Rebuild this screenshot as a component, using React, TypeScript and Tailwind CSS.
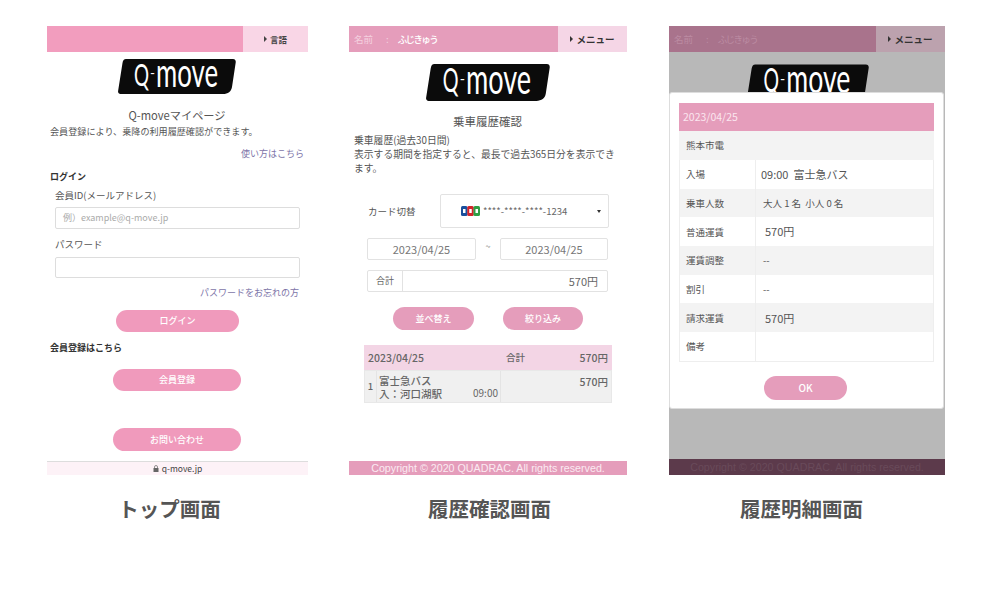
import React from "react";

const Logo = ({ w, h }: { w: number; h: number }) => (
  <svg width={w} height={h} viewBox="0 0 118 35" className="block">
    <path d="M8 0H115C117 0 118 1.500 117.700 3.500L114 28C113.300 32.500 110 35 105 35H2.500C0.800 35 -0.200 33.500 0.100 32L4.500 4C4.900 1.500 6 0 8 0Z" fill="#0b0b0b" />
    <g fill="#fff" fontFamily="Lato, sans-serif" fontWeight="400">
      <text x="16" y="27" fontSize="31" textLength="15" lengthAdjust="spacingAndGlyphs">Q</text>
      <text x="32" y="19" fontSize="14" textLength="5" lengthAdjust="spacingAndGlyphs">-</text>
      <text transform="translate(38 28) scale(1 1.9)" fontSize="21" textLength="62" lengthAdjust="spacingAndGlyphs">move</text>
    </g>
  </svg>
);

const Btn = ({ className, children }: { className: string; children: React.ReactNode }) => (
  <div className={`flex items-center justify-center rounded-full text-white text-[9px] font-medium ${className}`}>{children}</div>
);

const Caption = ({ className, children }: { className: string; children: React.ReactNode }) => (
  <div className={`mt-[20px] text-center text-[20.500px] leading-[26px] font-bold text-[#555] ${className}`}>{children}</div>
);

const Arrow = () => <span className="inline-block mr-[3px] w-0 h-0 border-y-[3px] border-y-transparent border-l-[3px] border-l-current" />;

const JcbIcon = () => (
  <svg width="19" height="10" viewBox="0 0 19 10" className="shrink-0">
    <rect x="0" y="0" width="6.500" height="10" rx="1.500" fill="#1b4f9c" />
    <rect x="6.250" y="0" width="6.500" height="10" rx="1.500" fill="#d2232a" />
    <rect x="12.500" y="0" width="6.500" height="10" rx="1.500" fill="#2f9e44" />
    <rect x="2" y="3" width="2.500" height="4" fill="#fff" />
    <rect x="8.250" y="3" width="2.500" height="4" fill="#fff" />
    <rect x="14.500" y="3" width="2.500" height="4" fill="#fff" />
  </svg>
);

const Top = () => (
  <div className="w-[261px]">
    <div className="h-[449px] flex flex-col text-[#555] bg-white">
      <div className="h-[26px] flex bg-[#f29dbe]">
        <div className="flex-1" />
        <div className="w-[65px] bg-[#f9d6e6] flex items-center justify-center text-[8.500px] font-bold text-[#444]"><Arrow />言語</div>
      </div>
      <div className="mt-[7px] ml-[71px]"><Logo w={118} h={35} /></div>
      <div className="mt-[13px] h-[16px] flex items-center justify-center text-[11.200px] ml-[-1px]">Q-moveマイページ</div>
      <div className="mt-[2px] h-[14px] flex items-center ml-[3px] text-[9.100px]">会員登録により、乗降の利用履歴確認ができます。</div>
      <div className="mt-[8px] h-[14px] flex items-center justify-end mr-[4px] text-[9px] text-[#7d74a8]">使い方はこちら</div>
      <div className="mt-[9px] h-[14px] flex items-center ml-[3px] text-[9px] font-bold text-[#333]">ログイン</div>
      <div className="mt-[4px] h-[14px] flex items-center ml-[8px] text-[9.500px]">会員ID(メールアドレス)</div>
      <div className="mt-[5px] mx-[8px] w-[245px] h-[22px] border border-[#ddd] rounded-[2px] flex items-center pl-[7px] text-[9px] text-[#aaa]">例）example@q-move.jp</div>
      <div className="mt-[8px] h-[14px] flex items-center ml-[8px] text-[9.500px]">パスワード</div>
      <div className="mt-[6px] mx-[8px] w-[245px] h-[21px] border border-[#ddd] rounded-[2px]" />
      <div className="mt-[8px] h-[14px] flex items-center justify-end mr-[9px] text-[9px] text-[#7d74a8]">パスワードをお忘れの方</div>
      <Btn className="mt-[10px] ml-[69px] w-[123px] h-[22px] bg-[#f09abc]">ログイン</Btn>
      <div className="mt-[9px] h-[14px] flex items-center ml-[3px] text-[9px] font-bold text-[#333]">会員登録はこちら</div>
      <Btn className="mt-[14px] ml-[66px] w-[128px] h-[22px] bg-[#f09abc]">会員登録</Btn>
      <Btn className="mt-[37px] ml-[66px] w-[128px] h-[23px] bg-[#f09abc]">お問い合わせ</Btn>
      <div className="mt-[10px] h-[14px] bg-[#fdf2f7] border-t border-[#ddd] flex items-center justify-center text-[8.500px] text-[#444]">
        <svg width="6" height="7" viewBox="0 0 6 7" className="mr-[3px]"><rect x="0.500" y="3" width="5" height="4" fill="#666" /><path d="M1.500 3V2a1.500 1.500 0 0 1 3 0V3" fill="none" stroke="#666" strokeWidth="0.700" /></svg>
        q-move.jp
      </div>
    </div>
    <Caption className="pr-[16px]">トップ画面</Caption>
  </div>
);

const History = () => (
  <div className="w-[278px] ml-[41px]">
    <div className="h-[449px] flex flex-col text-[#555] bg-white">
      <div className="h-[26px] flex bg-[#e59dbb]">
        <div className="flex-1 flex items-center pl-[5px] text-[9.500px] text-[#fbe6ef]"><span className="opacity-70 mr-[13px]">名前</span><span className="opacity-70 mr-[9px]">:</span><span className="tracking-[-1.600px] font-medium text-white">ふじきゅう</span></div>
        <div className="w-[69px] bg-[#f5d6e6] flex items-center justify-center text-[9.500px] font-bold text-[#333]"><Arrow />メニュー</div>
      </div>
      <div className="mt-[12px] ml-[77px]"><Logo w={124} h={37} /></div>
      <div className="mt-[14px] h-[14px] flex items-center justify-center text-[11.500px] ml-[-1px]">乗車履歴確認</div>
      <div className="mt-[4px] mx-[5px] text-[9.800px] leading-[14px] w-[262px]">
        <div>乗車履歴(過去30日間)</div>
        <div>表示する期間を指定すると、最長で過去365日分を表示できます。</div>
      </div>
      <div className="mt-[19px] flex items-center">
        <div className="ml-[19px] w-[72px] text-[9.500px]">カード切替</div>
        <div className="w-[169px] h-[34px] border border-[#e2e2e2] rounded-[2px] flex items-center pl-[20px] pr-[7px]">
          <JcbIcon />
          <span className="ml-[3px] text-[9.500px] text-[#666]">****-****-****-1234</span>
          <span className="ml-auto w-0 h-0 border-x-[2.500px] border-x-transparent border-t-[3px] border-t-[#333]" />
        </div>
      </div>
      <div className="mt-[10px] ml-[18px] w-[241px] flex items-center justify-between text-[11px] text-[#777]">
        <div className="w-[109px] h-[22px] border border-[#e2e2e2] rounded-[2px] flex items-center justify-center">2023/04/25</div>
        <span className="-mt-[4px] text-[9px]">~</span>
        <div className="w-[108px] h-[22px] border border-[#e2e2e2] rounded-[2px] flex items-center justify-center">2023/04/25</div>
      </div>
      <div className="mt-[10px] ml-[18px] w-[241px] h-[22px] border border-[#e2e2e2] rounded-[2px] flex items-center text-[#666]">
        <div className="w-[35px] h-full border-r border-[#e2e2e2] flex items-center justify-center text-[9px]">合計</div>
        <div className="flex-1 text-right pr-[9px] text-[11px]">570円</div>
      </div>
      <div className="mt-[15px] ml-[44px] flex gap-[29px]">
        <Btn className="w-[81px] h-[23px] bg-[#e59dbb]">並べ替え</Btn>
        <Btn className="w-[80px] h-[23px] bg-[#e59dbb]">絞り込み</Btn>
      </div>
      <div className="mt-[15px] ml-[15px] w-[248px] text-[#666] font-medium">
        <div className="h-[25px] bg-[#f3d5e5] flex items-center text-[10.500px]">
          <div className="w-[142px] pl-[4px]">2023/04/25</div>
          <div className="text-[9.500px]">合計</div>
          <div className="ml-auto pr-[4px]">570円</div>
        </div>
        <div className="h-[33px] bg-[#f0f0f0] flex text-[10.500px] leading-[13px] border border-[#e8e8e8]">
          <div className="w-[12px] flex items-center justify-center border-r border-[#e4e4e4] text-[9.500px]">1</div>
          <div className="w-[124px] pl-[2px] pt-[3px] border-r border-[#e4e4e4] relative">
            <div className="w-fit">富士急バス</div>
            <div className="w-fit">入：河口湖駅</div>
            <div className="absolute right-[2px] bottom-[3px] text-[10px] leading-[12px] font-normal">09:00</div>
          </div>
          <div className="flex-1 text-right pr-[3px] pt-[4px]">570円</div>
        </div>
      </div>
      <div className="mt-auto h-[14px] bg-[#e59dbb] flex items-center justify-center text-[10.700px] text-[#fbeaf2] font-['Liberation_Sans',sans-serif]">Copyright © 2020 QUADRAC. All rights reserved.</div>
    </div>
    <Caption className="pl-[3px]">履歴確認画面</Caption>
  </div>
);

const rows: [string, string, string][] = [
  ["入場", "09:00  富士急バス", "pl-[5px] text-[11px]"],
  ["乗車人数", "大人 1 名  小人 0 名", "pl-[7px] text-[9.500px]"],
  ["普通運賃", "570円", "pl-[9px] text-[11px]"],
  ["運賃調整", "--", "pl-[7px] text-[9.500px]"],
  ["割引", "--", "pl-[7px] text-[9.500px]"],
  ["請求運賃", "570円", "pl-[9px] text-[11px]"],
  ["備考", "", "pl-[7px] text-[9.500px]"],
];

const Detail = () => (
  <div className="w-[276px] ml-[42px]">
    <div className="relative h-[449px] flex flex-col bg-[#b8b8b8] overflow-hidden">
      <div className="h-[26px] flex bg-[#a9738c] shrink-0">
        <div className="flex-1 flex items-center pl-[5px] text-[9.500px] text-[#bb8ba2]"><span className="mr-[13px]">名前</span><span className="mr-[9px]">:</span><span className="tracking-[-1.600px]">ふじきゅう</span></div>
        <div className="w-[69px] bg-[#bca2ae] flex items-center justify-center text-[9.500px] font-bold text-[#333]"><Arrow />メニュー</div>
      </div>
      <div className="mt-[12px] ml-[78px]"><Logo w={122} h={37} /></div>
      <div className="mt-auto h-[16px] bg-[#5c3a4b] flex items-center justify-center text-[10.700px] text-[#694a5a] font-['Liberation_Sans',sans-serif]">Copyright © 2020 QUADRAC. All rights reserved.</div>
      <div className="absolute left-0 top-[66px] w-[275px] h-[317px] bg-white rounded-[3px] px-[9px] pt-[10px] text-[#555] border border-[#ddd]">
        <div className="h-[28px] bg-[#e59dbb] flex items-center pl-[4px] text-[10.500px] text-[#fbe6ef]">2023/04/25</div>
        <div className="h-[29px] bg-[#f3f3f3] flex items-center pl-[7px] text-[9.500px]">熊本市電</div>
        <div className="border-x border-b border-[#eee]">
          {rows.map(([k, v, c], i) => (
            <div key={k} className={`h-[28.700px] grid grid-cols-[76px_1fr] items-stretch ${i % 2 ? "bg-[#f3f3f3]" : "bg-white"}`}>
              <div className="flex items-center pl-[6px] text-[9.500px] border-r border-[#eee]">{k}</div>
              <div className={`flex items-center whitespace-pre ${c}`}>{v}</div>
            </div>
          ))}
        </div>
        <Btn className="mt-[14px] ml-[85px] w-[83px] h-[24px] bg-[#e59dbb] text-[10px]">OK</Btn>
      </div>
    </div>
    <Caption className="pr-[11px]">履歴明細画面</Caption>
  </div>
);

export default function App() {
  return (
    <div className="w-[993px] h-[613px] bg-white overflow-hidden flex pl-[47px] pt-[26px] font-['Noto_Sans_CJK_JP',sans-serif]">
      <Top />
      <History />
      <Detail />
    </div>
  );
}
